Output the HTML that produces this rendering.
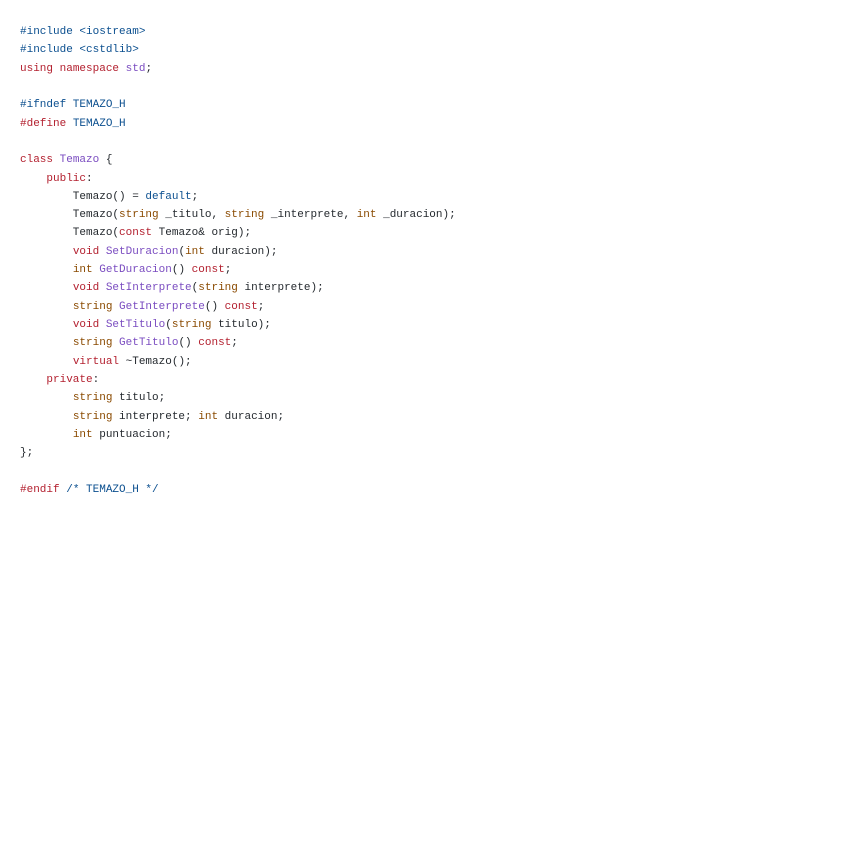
<!DOCTYPE html>
<html><head><meta charset="utf-8"><style>
html,body{margin:0;background:#fff;width:848px;height:848px;overflow:hidden}
pre{margin:0;position:absolute;left:20px;top:23px;font-family:"Liberation Mono",monospace;font-size:11px;line-height:18.32px;color:#24292e}
.k{color:#b3202f}.f{color:#7a4cc0}.b{color:#0b4f8f}.t{color:#8a4a00}
</style></head><body><pre><span class="b">#include &lt;iostream&gt;</span>
<span class="b">#include &lt;cstdlib&gt;</span>
<span class="k">using</span> <span class="k">namespace</span> <span class="f">std</span>;

<span class="b">#ifndef TEMAZO_H</span>
<span class="k">#define</span> <span class="b">TEMAZO_H</span>

<span class="k">class</span> <span class="f">Temazo</span> {
    <span class="k">public</span>:
        Temazo() = <span class="b">default</span>;
        Temazo(<span class="t">string</span> _titulo, <span class="t">string</span> _interprete, <span class="t">int</span> _duracion);
        Temazo(<span class="k">const</span> Temazo&amp; orig);
        <span class="k">void</span> <span class="f">SetDuracion</span>(<span class="t">int</span> duracion);
        <span class="t">int</span> <span class="f">GetDuracion</span>() <span class="k">const</span>;
        <span class="k">void</span> <span class="f">SetInterprete</span>(<span class="t">string</span> interprete);
        <span class="t">string</span> <span class="f">GetInterprete</span>() <span class="k">const</span>;
        <span class="k">void</span> <span class="f">SetTitulo</span>(<span class="t">string</span> titulo);
        <span class="t">string</span> <span class="f">GetTitulo</span>() <span class="k">const</span>;
        <span class="k">virtual</span> ~Temazo();
    <span class="k">private</span>:
        <span class="t">string</span> titulo;
        <span class="t">string</span> interprete; <span class="t">int</span> duracion;
        <span class="t">int</span> puntuacion;
};

<span class="k">#endif</span> <span class="b">/* TEMAZO_H */</span>
</pre></body></html>
